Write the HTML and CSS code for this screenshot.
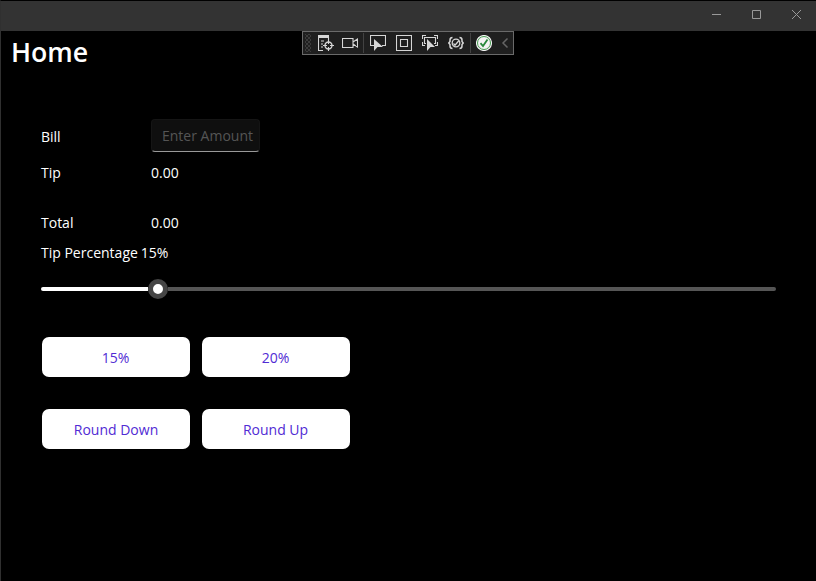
FILE: index.html
```html
<!DOCTYPE html>
<html lang="en">
<head>
<meta charset="utf-8">
<title>Home</title>
<link rel="stylesheet" href="styles.css">
</head>
<body>
<div class="window">
  <header class="titlebar">
    <svg class="control" viewBox="0 0 40 29"><path d="M12 13.500h9"/></svg>
    <svg class="control" viewBox="0 0 40 29"><path d="M12.500 9.500h8v8h-8z"/></svg>
    <svg class="control" viewBox="0 0 40 29"><path d="M12 9l9 9M21 9l-9 9"/></svg>
  </header>

  <div class="debugbar">
    <span class="grip"></span>
    <svg class="tool" viewBox="0 0 16 16"><path class="fill" d="M0 0h11v3H0z"/><path d="M.5 2v13.500H5M10.500 2v3M3 6h3M3 9h2M3 12h2"/><circle class="target" cx="10.500" cy="10.500" r="3.500"/><path d="M10.500 5v4M10.500 12v4M5 10.500h4M12 10.500h4"/></svg>
    <svg class="tool camera" viewBox="0 0 16 16"><path d="M.5 3.500h10.500v9H.5zM11 7l4.500-3v8L11 9"/></svg>
    <span class="separator first"></span>
    <svg class="tool select" viewBox="0 0 16 16"><path d="M4 10.500H.5V.5h15v10H12"/><path class="fill" d="M4 4v12l3.500-4H13z"/></svg>
    <svg class="tool layout" viewBox="0 0 16 16"><path d="M.5.5h15v15H.5zM4.500 4.500h7v7h-7z"/></svg>
    <svg class="tool track" viewBox="0 0 16 16"><path d="M.5 4V.5H4M12 .5h3.500V4M.5 7v3.500H3M15.500 7v3.500H13M4 8.500H2.500v-6h11v6H12"/><path class="fill" d="M5 4v12l3.500-4H13z"/></svg>
    <svg class="tool binding" viewBox="0 0 16 16"><path class="brace" d="M4.500 2.500Q2 2.500 2 5v1.500L.8 8 2 9.500V11q0 2.500 2.500 2.500M11.500 2.500Q14 2.500 14 5v1.500L15.200 8 14 9.500V11q0 2.500-2.500 2.500"/><circle class="inner" cx="8" cy="8" r="3.800"/><path class="inner" d="M5.500 8.500L7 10.200 11 5.500"/></svg>
    <span class="separator second"></span>
    <svg class="tool status" viewBox="0 0 16 16"><circle class="disc" cx="8" cy="8" r="7.500"/><circle class="ring" cx="8" cy="8" r="6.500"/><path class="tick" d="M4.500 8.200L7 11l4.500-6.500"/></svg>
    <svg class="collapse" viewBox="0 0 8 12"><path d="M6.500 1.500L2 6l4.500 4.500"/></svg>
  </div>

  <main class="page">
    <h1>Home</h1>
    <section class="form">
      <div class="row bill"><label for="bill">Bill</label><input id="bill" type="text" placeholder="Enter Amount"></div>
      <div class="row tip"><span>Tip</span><span>0.00</span></div>
      <div class="row total"><span>Total</span><span>0.00</span></div>
      <div class="row percent"><span>Tip Percentage</span><span>15%</span></div>
      <div class="slider"><div class="filled"></div><div class="thumb"></div><div class="rest"></div></div>
      <div class="buttons">
        <button>15%</button><button>20%</button>
        <button class="down">Round Down</button><button>Round Up</button>
      </div>
    </section>
  </main>
</div>
</body>
</html>
```
FILE: styles.css
```css
* { box-sizing: border-box; }

body {
  margin: 0;
  background: #000;
  color: #fff;
  font: 14px/20px "Open Sans", "Noto Sans", sans-serif;
}

.window {
  position: relative;
  height: 581px;
  overflow: hidden;
  border-top: 1px solid #000;
  border-left: 1px solid #303030;
}

.titlebar {
  display: flex;
  justify-content: flex-end;
  height: 30px;
  background: #333;
}

.control {
  flex: none;
  width: 40px;
  height: 29px;
  fill: none;
  stroke: #999;
  stroke-width: 1;
}

.control:last-child { margin-right: -4px; }

.debugbar {
  position: absolute;
  top: 30px;
  left: 301px;
  display: flex;
  align-items: center;
  width: 212px;
  height: 24px;
  padding-left: 2px;
  border: 1px solid #6a6a6a;
  background: #1f1f1f;
}

.grip {
  width: 6px;
  height: 18px;
  margin-right: 7px;
  background:
    radial-gradient(circle, #484848 0.6px, transparent 1px) 0 0 / 4px 4px,
    radial-gradient(circle, #484848 0.6px, transparent 1px) 2px 2px / 4px 4px;
}

.tool {
  flex: none;
  width: 16px;
  height: 16px;
  fill: none;
  stroke: #d6d6d6;
  stroke-width: 1.1;
}

.tool .fill { fill: #d6d6d6; stroke: none; }
.tool .target { stroke-width: 1.4; }
.camera { margin-left: 8px; }
.separator { flex: none; width: 1px; height: 20px; background: #424242; }
.first { margin-left: 5px; }
.select { margin-left: 6px; }
.layout, .track, .binding { margin-left: 10px; }
.second { margin-left: 6px; }
.status { margin-left: 5px; }
.tool .brace { stroke-width: 1.5; }
.tool .inner { stroke-width: 1.3; }
.tool .disc { fill: #f3f3f3; stroke: #f3f3f3; }
.tool .ring { stroke: #469b50; stroke-width: 1; }
.tool .tick { stroke: #27883a; stroke-width: 1.8; }

.collapse {
  flex: none;
  width: 8px;
  height: 12px;
  margin-left: 9px;
  fill: none;
  stroke: #666;
  stroke-width: 1.5;
}

.page { padding: 2px 40px 0 10px; }

h1 {
  margin: 0;
  font-size: 26.7px;
  line-height: 38px;
  font-weight: 600;
}

.form { padding: 48px 0 0 30px; }

.row {
  display: grid;
  grid-template-columns: 110px 1fr;
  align-items: center;
}

.bill { height: 33px; }
.bill label { padding-top: 3px; }

input {
  width: 109px;
  height: 33px;
  padding: 0 0 0 10px;
  border: 1px solid #151515;
  border-bottom-color: #999;
  border-radius: 4px;
  outline: none;
  background: #0f0f0f;
  color: #fff;
  font: inherit;
}

input::placeholder { color: #555; opacity: 1; }

.tip { margin-top: 11px; }
.total { margin-top: 30px; }
.percent { display: flex; gap: 3px; margin-top: 10px; }

.slider {
  display: flex;
  align-items: center;
  width: 735px;
  height: 22px;
  margin-top: 15px;
}

.filled { width: 107px; height: 4px; border-radius: 2px 0 0 2px; background: #fff; }

.thumb {
  width: 20px;
  height: 20px;
  border: 5px solid #454545;
  border-radius: 50%;
  background: #fff;
}

.rest { flex: 1; height: 4px; border-radius: 0 2px 2px 0; background: #555; }

.buttons {
  display: grid;
  grid-template-columns: 148px 148px;
  gap: 32px 12px;
  margin: 37px 0 0 1px;
}

button {
  height: 40px;
  padding: 2px 1px 0 0;
  border: 0;
  border-radius: 7px;
  background: #fff;
  color: #512bd4;
  font: inherit;
}

button.down { padding-right: 0; }
```
